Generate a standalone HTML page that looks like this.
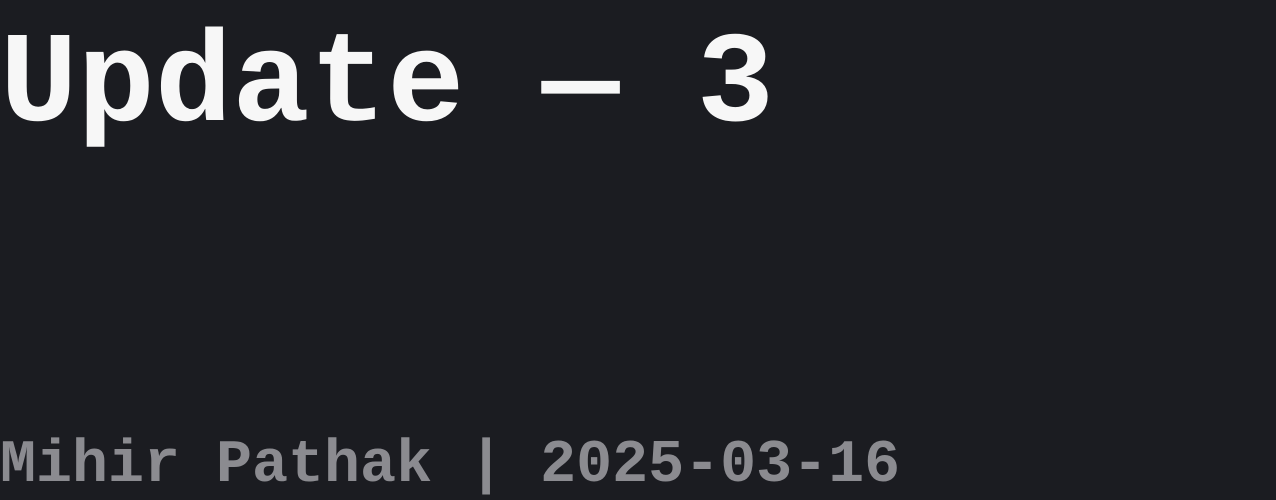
<!DOCTYPE html>
<html><head><meta charset="utf-8"><style>
html,body{margin:0;padding:0;width:1276px;height:498px;background:#1b1c21;overflow:hidden}
.t{position:absolute;left:0;top:22px;font:bold 129px/1 "Liberation Mono",monospace;color:#f7f7f7;white-space:pre;letter-spacing:0}
.b{position:absolute;left:0;top:436px;font:bold 60px/1 "Liberation Mono",monospace;color:#8b8b90;white-space:pre}
</style></head><body>
<div class="t">Update — 3</div>
<div class="b">Mihir Pathak | 2025-03-16</div>
</body></html>
